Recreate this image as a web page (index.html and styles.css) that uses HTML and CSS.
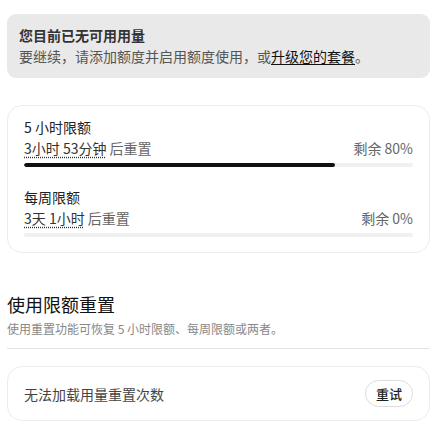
FILE: index.html
```html
<!DOCTYPE html>
<html lang="zh-CN">
<head>
<meta charset="utf-8">
<link rel="stylesheet" href="styles.css">
</head>
<body>
<div class="page">
  <div class="alert">
    <div class="alert-title">您目前已无可用用量</div>
    <div class="alert-text">要继续，请添加额度并启用额度使用，或<a class="link" href="#">升级您的套餐</a>。</div>
  </div>

  <div class="card limits">
    <div class="limit">
      <div class="limit-name">5 小时限额</div>
      <div class="limit-row">
        <span class="reset"><span class="dotted">3小时 53分钟</span> 后重置</span>
        <span class="remain">剩余 80%</span>
      </div>
      <div class="bar"><div class="fill" style="width:80%"></div></div>
    </div>
    <div class="limit second">
      <div class="limit-name">每周限额</div>
      <div class="limit-row">
        <span class="reset"><span class="dotted">3天 1小时</span> 后重置</span>
        <span class="remain">剩余 0%</span>
      </div>
      <div class="bar"><div class="fill" style="width:0%"></div></div>
    </div>
  </div>

  <h2 class="section-title">使用限额重置</h2>
  <p class="section-sub">使用重置功能可恢复 5 小时限额、每周限额或两者。</p>
  <div class="divider"></div>

  <div class="card reset-card">
    <span class="reset-msg">无法加载用量重置次数</span>
    <button class="retry">重试</button>
  </div>
</div>
</body>
</html>
```

FILE: styles.css
```css
* { box-sizing: border-box; }
html, body { margin: 0; padding: 0; background: #fff; }
body {
  font-family: "Microsoft YaHei", "Noto Sans CJK SC", "Noto Sans", sans-serif;
  font-size: 14px;
  color: #222;
}
.page {
  padding: 14px 16px 0 7px;
}
.alert {
  background: #e9e9e9;
  border-radius: 9px;
  padding: 11px 12px 11px 12px;
  line-height: 21px;
}
.alert-title {
  font-weight: 700;
  color: #333;
}
.alert-text {
  color: #555;
}
.link {
  color: #111;
  text-decoration: underline;
  text-underline-offset: 2px;
}
.card {
  border: 1px solid #ececec;
  border-radius: 15px;
  background: #fff;
}
.limits {
  margin-top: 27px;
  padding: 11px 16px 15px 16px;
}
.limit-name {
  line-height: 21px;
  color: #222;
}
.limit-row {
  display: flex;
  justify-content: space-between;
  line-height: 21px;
}
.reset { color: #666; }
.dotted {
  color: #333;
  text-decoration: underline dotted #333;
  text-underline-offset: 3px;
}
.remain { color: #666; }
.bar {
  margin-top: 4px;
  height: 4px;
  border-radius: 2px;
  background: #f0f0f0;
  overflow: hidden;
}
.fill {
  height: 100%;
  background: #111;
  border-radius: 2px;
}
.second { margin-top: 20px; }
.section-title {
  margin: 38px 0 0;
  font-size: 18px;
  font-weight: 400;
  line-height: 26px;
  color: #111;
}
.section-sub {
  margin: 3px 0 0;
  font-size: 12px;
  line-height: 18px;
  color: #888;
}
.divider {
  margin-top: 10px;
  height: 1px;
  background: #e3e3e3;
}
.reset-card {
  margin-top: 17px;
  display: flex;
  align-items: center;
  justify-content: space-between;
  padding: 13px 16px;
}
.reset-msg {
  color: #444;
  line-height: 20px;
}
.retry {
  height: 27px;
  padding: 0 10px;
  border: 1px solid #dcdcdc;
  border-radius: 14px;
  background: #fff;
  font-family: inherit;
  font-size: 13px;
  font-weight: 500;
  color: #222;
}
```
